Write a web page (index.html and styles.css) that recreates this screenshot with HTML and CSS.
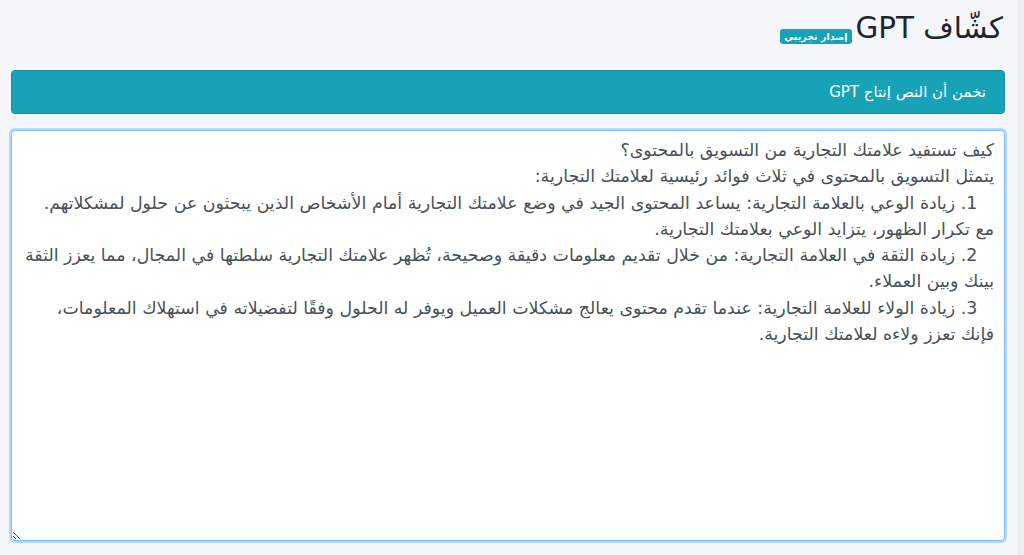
FILE: index.html
```html
<!DOCTYPE html>
<html lang="ar" dir="rtl">
<head>
<meta charset="utf-8">
<title>كشّاف GPT</title>
<link rel="stylesheet" href="styles.css">
</head>
<body>
<div class="layout">
  <main class="content">
    <h1 class="title">كشّاف GPT<span class="badge">إصدار تجريبي</span></h1>
    <div class="alert">نخمن أن النص إنتاج GPT</div>
    <textarea class="field" wrap="off" spellcheck="false">كيف تستفيد علامتك التجارية من التسويق بالمحتوى؟
يتمثل التسويق بالمحتوى في ثلاث فوائد رئيسية لعلامتك التجارية:
   1. زيادة الوعي بالعلامة التجارية: يساعد المحتوى الجيد في وضع علامتك التجارية أمام الأشخاص الذين يبحثون عن حلول لمشكلاتهم.
مع تكرار الظهور، يتزايد الوعي بعلامتك التجارية.
   2. زيادة الثقة في العلامة التجارية: من خلال تقديم معلومات دقيقة وصحيحة، تُظهر علامتك التجارية سلطتها في المجال، مما يعزز الثقة
بينك وبين العملاء.
   3. زيادة الولاء للعلامة التجارية: عندما تقدم محتوى يعالج مشكلات العميل ويوفر له الحلول وفقًا لتفضيلاته في استهلاك المعلومات،
فإنك تعزز ولاءه لعلامتك التجارية.</textarea>
  </main>
  <div class="edge"></div>
</div>
</body>
</html>
```
FILE: styles.css
```css
html, body {
  margin: 0;
  height: 100%;
}
body {
  background: #f4f6f9;
  font-family: "DejaVu Sans", sans-serif;
  color: #212529;
  overflow: hidden;
}
.layout {
  direction: ltr;
  display: flex;
  flex-direction: row;
  height: 555px;
}
.content {
  direction: rtl;
  flex: 1;
  padding: 11px 12px 0 11px;
  display: flex;
  flex-direction: column;
}
.edge {
  width: 7px;
  background: #eceef1;
}
.title {
  margin: 0 0 25px 0;
  padding-right: 2px;
  font-size: 29.4px;
  font-weight: 400;
  line-height: 34px;
  height: 34px;
  color: #212529;
}
.badge {
  display: inline-block;
  vertical-align: -2px;
  margin-right: 4px;
  background: #17a2b8;
  color: #fff;
  font-size: 9.5px;
  font-weight: 700;
  line-height: 11px;
  padding: 2px 4px 2px 4px;
  border-radius: 3px;
}
.alert {
  background: #17a2b8;
  color: #fff;
  font-size: 15px;
  line-height: 20px;
  padding: 11px 18px;
  border-radius: 4px;
  border: 1px solid #148ea1;
  margin-bottom: 16px;
}
.field {
  display: block;
  box-sizing: border-box;
  width: 100%;
  height: 411px;
  margin: 0;
  padding: 6px 10px;
  font-family: "DejaVu Sans", sans-serif;
  font-size: 17.4px;
  line-height: 26.3px;
  color: #495057;
  background: #fff;
  border: 1px solid #80bdff;
  border-radius: 4px;
  box-shadow: 0 0 0 2px rgba(0, 123, 255, 0.25);
  outline: none;
  white-space: pre;
  overflow: hidden;
  resize: vertical;
}
```
